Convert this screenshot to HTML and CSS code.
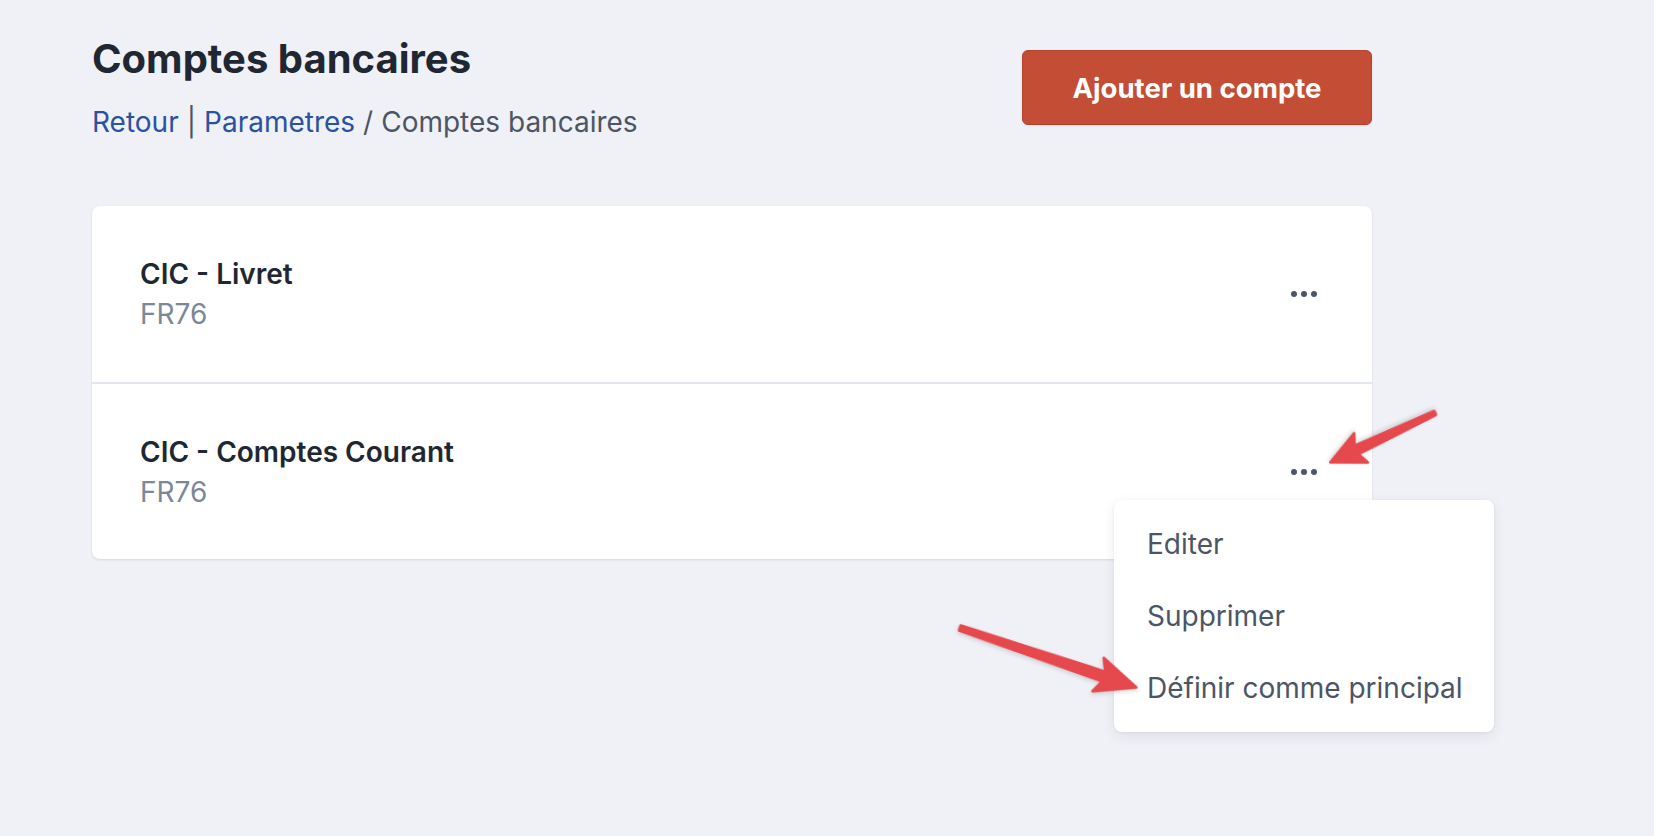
FILE: index.html
```html
<!DOCTYPE html>
<html lang="fr">
<head>
<meta charset="utf-8">
<title>Comptes bancaires</title>
<link rel="stylesheet" href="styles.css">
</head>
<body>
<div class="page">
  <header class="header">
    <div class="heading">
      <h1 class="title">Comptes bancaires</h1>
      <nav class="breadcrumb">
        <a class="crumb-link" href="#">Retour</a><span class="sep bar">|</span><a class="crumb-link" href="#">Parametres</a><span class="sep slash">/</span><span class="crumb-current">Comptes bancaires</span>
      </nav>
    </div>
    <button class="btn-primary" type="button">Ajouter un compte</button>
  </header>

  <section class="card">
    <div class="row">
      <div class="row-text">
        <div class="row-title">CIC - Livret</div>
        <div class="row-sub">FR76</div>
      </div>
      <button class="dots" type="button" aria-label="Actions"><span></span><span></span><span></span></button>
    </div>
    <div class="row row-divided">
      <div class="row-text">
        <div class="row-title">CIC - Comptes Courant</div>
        <div class="row-sub">FR76</div>
      </div>
      <button class="dots" type="button" aria-label="Actions"><span></span><span></span><span></span></button>
    </div>

    <ul class="menu">
      <li class="menu-item">Editer</li>
      <li class="menu-item">Supprimer</li>
      <li class="menu-item">Définir comme principal</li>
    </ul>
  </section>

  <svg class="arrows" width="1654" height="836" viewBox="0 0 1654 836" aria-hidden="true">
    <g class="arrow" transform="translate(1435 413) rotate(154.75)">
      <polygon points="0,-2 87,-4.5 82,-16 115.5,0 82,16 87,4.5 0,2"/>
    </g>
    <g class="arrow" transform="translate(960 628) rotate(18.63)">
      <polygon points="0,-2.5 152,-5 146,-17.5 186,0 146,17.5 152,5 0,2.5"/>
    </g>
  </svg>
</div>
</body>
</html>
```

FILE: styles.css
```css
* { box-sizing: border-box; }

html, body {
  margin: 0;
  padding: 0;
  background: #eff1f6;
  font-family: Inter, "Noto Sans", "Liberation Sans", sans-serif;
  color: #1f2832;
}

.page {
  position: relative;
  width: 1654px;
  height: 836px;
  padding: 35px 0 0 92px;
}

.header {
  width: 1280px;
  display: flex;
  justify-content: space-between;
  align-items: flex-start;
}

.title {
  margin: 0;
  font-size: 40px;
  line-height: 48px;
  font-weight: 700;
  color: #1f2832;
}

.breadcrumb {
  margin-top: 18.5px;
  font-size: 28px;
  line-height: 40px;
  color: #4b5565;
}

.crumb-link {
  color: #2b51a1;
  text-decoration: none;
}

.sep {
  color: #4b5565;
  margin: 0 8px;
}

.btn-primary {
  margin-top: 15px;
  width: 350px;
  height: 75px;
  background: #c34d35;
  border: 1px solid #b3432e;
  border-radius: 6px;
  color: #ffffff;
  font-family: inherit;
  font-size: 27.6px;
  font-weight: 700;
  display: flex;
  align-items: center;
  justify-content: center;
  box-shadow: 0 1px 2px rgba(0, 0, 0, 0.08);
  cursor: pointer;
}

.card {
  position: relative;
  width: 1280px;
  margin-top: 64.5px;
  background: #ffffff;
  border-radius: 8px;
  box-shadow: 0 1px 3px rgba(30, 40, 60, 0.08), 0 1px 2px rgba(30, 40, 60, 0.04);
}

.row {
  display: flex;
  align-items: center;
  justify-content: space-between;
  padding: 48px 55px 48px 48px;
}

.row-divided {
  border-top: 2px solid #e3e6ee;
  padding-bottom: 47px;
}

.row-title {
  font-size: 28px;
  line-height: 40px;
  font-weight: 600;
  color: #1f2832;
}

.row-sub {
  font-size: 28px;
  line-height: 40px;
  color: #7b8898;
}

.dots {
  display: flex;
  gap: 4px;
  padding: 0;
  border: 0;
  background: transparent;
  cursor: pointer;
}

.dots span {
  width: 6px;
  height: 6px;
  border-radius: 50%;
  background: #4b5668;
}

.menu {
  position: absolute;
  left: 1022px;
  top: 294px;
  width: 380px;
  margin: 0;
  padding: 8px 0;
  list-style: none;
  background: #ffffff;
  border-radius: 8px;
  box-shadow: 0 4px 14px rgba(30, 40, 60, 0.08), 0 1px 3px rgba(30, 40, 60, 0.06);
}

.menu-item {
  padding: 16px 20px 16px 33px;
  font-size: 28px;
  line-height: 40px;
  color: #4b5565;
  white-space: nowrap;
}

.arrows {
  position: absolute;
  left: 0;
  top: 0;
  pointer-events: none;
  overflow: visible;
}

.arrow polygon {
  fill: #e5484d;
  stroke: #e5484d;
  stroke-width: 3;
  stroke-linejoin: round;
  filter: drop-shadow(0 2px 2px rgba(0, 0, 0, 0.15));
}
```
